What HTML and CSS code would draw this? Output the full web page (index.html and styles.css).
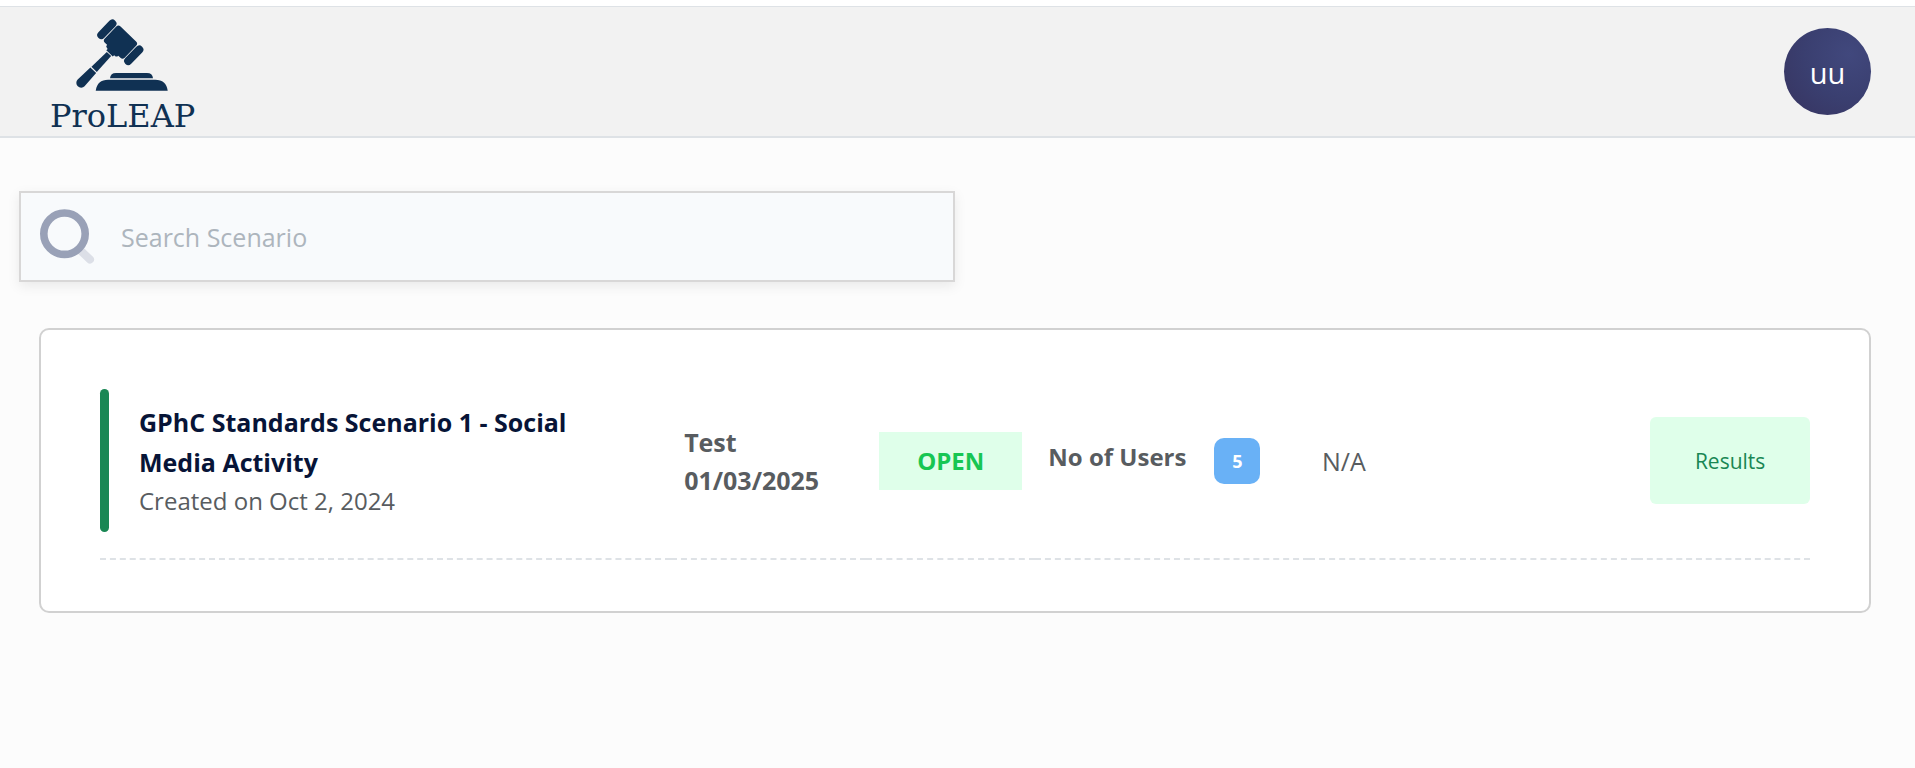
FILE: index.html
```html
<!DOCTYPE html>
<html lang="en">
<head>
  <meta charset="utf-8" />
  <title>ProLEAP</title>
  <meta name="viewport" content="width=device-width, initial-scale=1" />
  <link rel="stylesheet" href="styles.css">
</head>
<body>
  <header class="navbar">
    <a class="logo" href="#">
      <svg class="logo-icon" viewBox="2 -1 98 74" aria-hidden="true">
        <!-- gavel -->
        <g transform="translate(48.3 23.3) rotate(44)">
          <rect x="-22.8" y="-12" width="8.200" height="24" rx="4.100" />
          <path d="M-13.800 -8.500q0 -3 3 -3h21.600q3 0 3 3v16.500q0 3 -3 3h-3q0 2.500 -2.500 2.500h-.8v2h-9v-2h-.8q-2.500 0 -2.500 -2.500h-3q-3 0 -3 -3z" />
          <rect x="14.600" y="-12" width="8.200" height="24" rx="4.100" />
          <path d="M-3 16.300h6l.7 21.400h-7.400z" />
          <path d="M-4 38.900h8l.8 17.500a4.800 4.800 0 0 1 -9.600 0z" />
        </g>
        <!-- sound block -->
        <path d="M38 59.300q.5 -5.300 6 -5.300h31q5.500 0 6 5.300z" />
        <path d="M23.700 71.800q1.500 -11 12.500 -11h47q11 0 12.500 11z" />
      </svg>
      <span class="logo-text">ProLEAP</span>
    </a>
    <button class="avatar" type="button">uu</button>
  </header>

  <main class="content">
    <label class="search">
      <svg class="search-icon" viewBox="0 0 56 56" aria-hidden="true">
        <path d="M42 42l9 8.500" stroke="#dcdfe7" stroke-width="8" stroke-linecap="round" />
        <circle cx="25.500" cy="24.700" r="20.700" fill="#f8fafc" stroke="#99a1b7" stroke-width="7.600" />
      </svg>
      <input class="search-input" type="text" placeholder="Search Scenario" aria-label="Search Scenario">
    </label>

    <section class="card">
      <table class="scenarios">
        <colgroup>
          <col class="col-name">
          <col class="col-test">
          <col class="col-status">
          <col class="col-users">
          <col class="col-score">
          <col class="col-action">
        </colgroup>
        <tbody>
          <tr>
            <td>
              <div class="scenario">
                <span class="bar"></span>
                <div class="scenario-info">
                  <a class="scenario-title" href="#">GPhC Standards Scenario 1 - Social Media Activity</a>
                  <span class="scenario-date">Created on Oct 2, 2024</span>
                </div>
              </div>
            </td>
            <td class="test">Test<br>01/03/2025</td>
            <td><span class="status">OPEN</span></td>
            <td>
              <div class="users">
                <span class="users-label">No of Users</span>
                <span class="users-count">5</span>
              </div>
            </td>
            <td>N/A</td>
            <td><button class="results-button" type="button">Results</button></td>
          </tr>
        </tbody>
      </table>
    </section>
  </main>
</body>
</html>
```
FILE: styles.css
```css
* {
  box-sizing: border-box;
}
body {
  margin: 0;
  padding-top: 6px;
  background: #fcfcfc;
  font-family: "Open Sans", sans-serif;
  font-size: 25px;
  line-height: 38px;
  color: #585c60;
}
.navbar {
  display: flex;
  justify-content: space-between;
  align-items: center;
  height: 132px;
  padding: 0 44px 0 50px;
  background: #f2f2f2;
  border-top: 1px solid #dee2e6;
  border-bottom: 2px solid #dee2e6;
  box-shadow: 0 -6px #fff;
}
.logo {
  display: flex;
  flex-direction: column;
  align-items: center;
  align-self: flex-end;
  gap: 4px;
  color: #103153;
  text-decoration: none;
}
.logo-icon {
  width: 98px;
  height: 74px;
  fill: #103153;
}
.logo-text {
  font-family: "DejaVu Serif", serif;
  font-size: 32px;
  line-height: 40px;
}
.avatar {
  width: 87px;
  height: 87px;
  padding: 2px 0 0;
  border: none;
  border-radius: 50%;
  background: radial-gradient(circle at 75% 30%, #41487d, #3a3f70 50%, #37335f);
  color: #fff;
  font-family: inherit;
  font-size: 29px;
  cursor: pointer;
}
.content {
  padding: 53px 24px 0 19px;
}
.search {
  display: flex;
  align-items: center;
  gap: 26px;
  width: 50%;
  height: 91px;
  padding-left: 18px;
  background: #f8fafc;
  border: 2px solid #d8d7d7;
  box-shadow: 0 4px 12px rgba(0, 0, 0, .08);
}
.search-icon {
  width: 56px;
  height: 56px;
}
.search-input {
  flex: 1;
  height: 100%;
  padding: 0;
  border: none;
  outline: none;
  background: transparent;
  font-family: inherit;
  font-size: 25px;
  color: #585c60;
}
.search-input::placeholder {
  color: #adb5bd;
}
.card {
  margin: 46px 20px 0;
  padding: 33px 59px 51px;
  background: #fff;
  border: 2px solid #d1d1d1;
  border-radius: 10px;
}
.scenarios {
  width: 100%;
  table-layout: fixed;
  border-collapse: separate;
  border-spacing: 0;
}
.scenarios td {
  padding: 26px 13px;
  border-bottom: 2px dashed #dee2e6;
  vertical-align: middle;
}
.scenarios td:first-child {
  padding-left: 0;
}
.scenarios td:last-child {
  padding-right: 0;
}
.col-name { width: 33.4%; }
.col-test { width: 11.4%; }
.col-status { width: 9.9%; }
.col-users { width: 16%; }
.col-score { width: 19.2%; }
.scenario {
  display: flex;
  align-items: center;
  gap: 30px;
}
.bar {
  align-self: stretch;
  width: 9px;
  border-radius: 5px;
  background: #198754;
}
.scenario-info {
  flex: 1;
  max-width: 450px;
  padding: 13px 0 12px;
}
.scenario-title {
  display: block;
  font-weight: 700;
  line-height: 40px;
  color: #071437;
  text-decoration: none;
}
.scenario-date {
  display: block;
  font-size: 24px;
}
.test {
  font-weight: 700;
}
.status {
  display: block;
  padding: 10px 0;
  background: #dfffea;
  color: #17c653;
  font-size: 24px;
  font-weight: 700;
  text-align: center;
}
.users {
  display: flex;
  align-items: flex-start;
  gap: 28px;
}
.users-label {
  font-size: 24px;
  font-weight: 700;
}
.users-count {
  width: 46px;
  border-radius: 10px;
  background: #69b1f6;
  color: #fff;
  font-size: 18px;
  font-weight: 700;
  line-height: 46px;
  text-align: center;
}
.results-button {
  display: block;
  width: 100%;
  height: 87px;
  border: none;
  border-radius: 6px;
  background: #dfffea;
  color: #198754;
  font-family: inherit;
  font-size: 21px;
  cursor: pointer;
}
```
